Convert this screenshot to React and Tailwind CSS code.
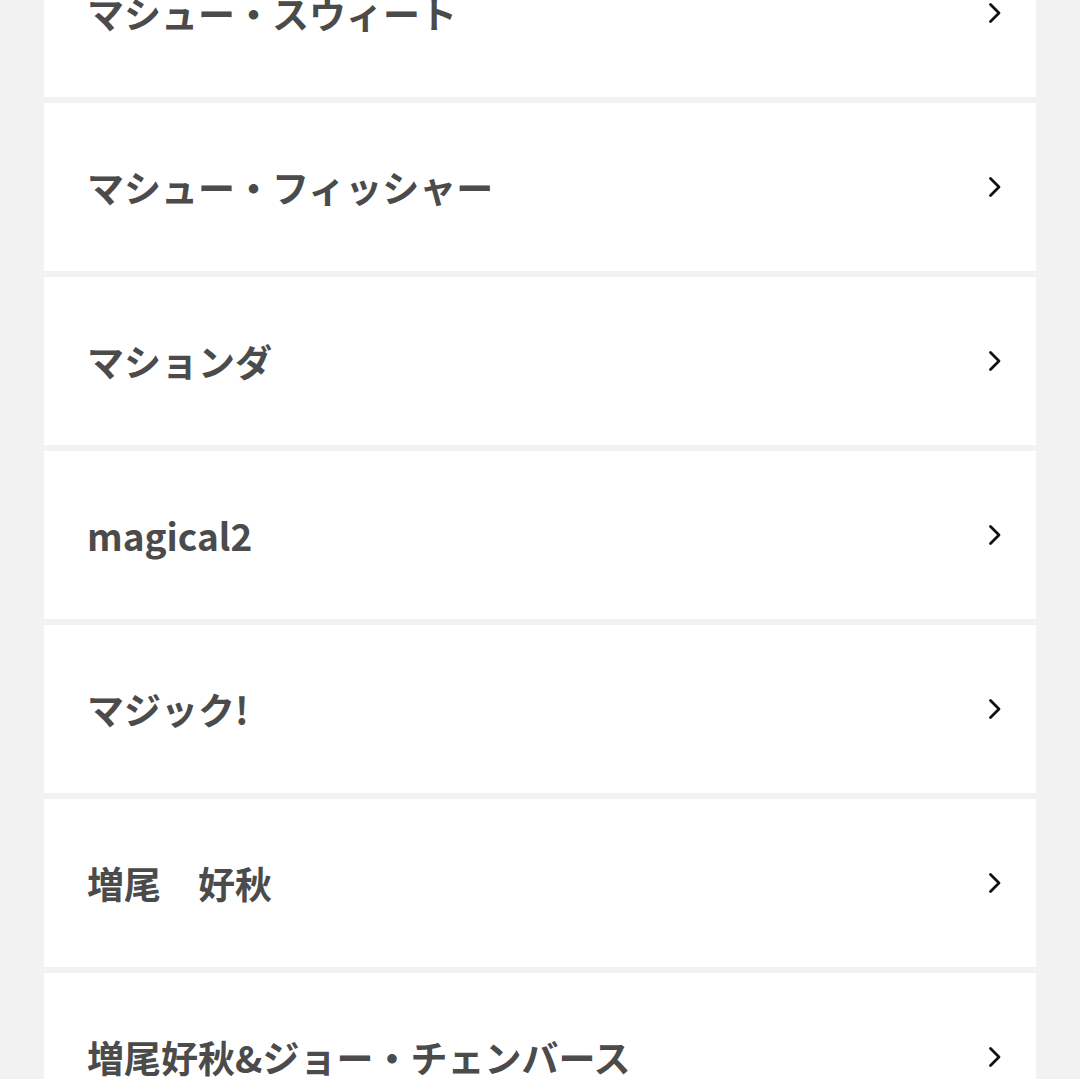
import React from 'react';

const items = [
  'マシュー・スウィート',
  'マシュー・フィッシャー',
  'マションダ',
  'magical2',
  'マジック!',
  '増尾　好秋',
  '増尾好秋&ジョー・チェンバース',
];

const Chevron = () => (
  <svg width="14" height="22" viewBox="0 0 14 22" fill="none" className="shrink-0">
    <path d="M2.5 2.5 L11 11 L2.5 19.5" stroke="#111" strokeWidth="2.8" strokeLinecap="round" strokeLinejoin="round" />
  </svg>
);

const App = () => {
  return (
    <div className="h-[1079px] overflow-hidden bg-[#f2f2f2]" style={{ fontFamily: '"Noto Sans CJK JP", "Noto Sans", sans-serif' }}>
      <ul className="-mt-[71px] mx-[44px] flex flex-col gap-[6px]">
        {items.map((name) => (
          <li key={name} className="h-[168px] bg-white flex items-center justify-between pl-[43px] pr-[34px]">
            <span className="text-[37px] font-bold text-[#4b4b4b] leading-none">{name}</span>
            <Chevron />
          </li>
        ))}
      </ul>
    </div>
  );
};

export default App;
